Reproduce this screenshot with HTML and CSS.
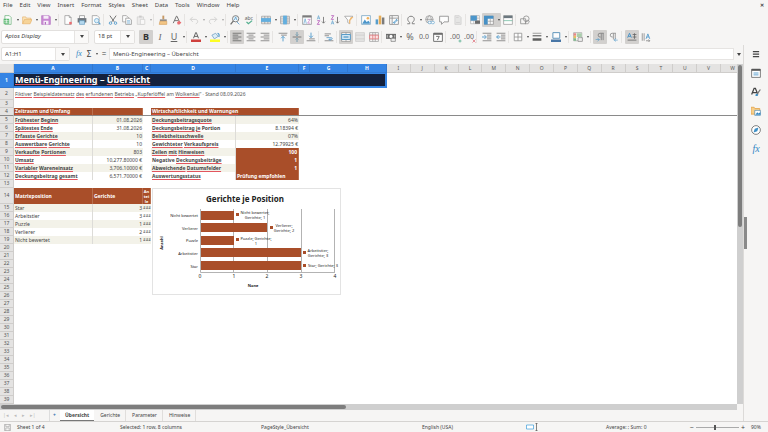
FILE: index.html
```html
<!DOCTYPE html>
<html lang="de">
<head>
<meta charset="utf-8">
<title>Menü-Engineering – Übersicht</title>
<link rel="stylesheet" href="styles.css">
</head>
<body>
<header class="menubar">
  <nav class="menus">
    <button>File</button><button>Edit</button><button>View</button><button>Insert</button><button>Format</button><button>Styles</button><button>Sheet</button><button>Data</button><button>Tools</button><button>Window</button><button>Help</button>
  </nav>
  <button class="close" aria-label="Close document">✕</button>
</header>

<div class="toolbar" role="toolbar" aria-label="Standard">
  <button class="tb" aria-label="New"><svg viewBox="0 0 16 16"><path d="M3 1h7l3 3v11H3z" fill="#fff" stroke="#3a9a50"/><path d="M1 6h9v8H1z" fill="#3fae5a"/><path d="M2 9h7M2 11.500h7M5.500 7v6" stroke="#fff"/></svg></button><button class="dd" aria-label="New options"></button>
  <button class="tb" aria-label="Open"><svg viewBox="0 0 16 16"><path d="M1 14V3h5l1 2h7v3" fill="#fbe3b4" stroke="#e3a34b"/><path d="M1 14l3-7h12l-3 7z" fill="#f7cf8a" stroke="#e3a34b"/></svg></button><button class="dd" aria-label="Open options"></button>
  <button class="tb" aria-label="Save"><svg viewBox="0 0 16 16"><path d="M1 1h12l2 2v12H1z" fill="#c276cf" stroke="#a55bb5"/><path d="M4 1h8v5H4zM4 9h8v6H4z" fill="#f7ecf9"/><path d="M6 11h2v4H6z" fill="#a55bb5"/></svg></button><button class="dd" aria-label="Save options"></button>
  <span class="sep"></span>
  <button class="tb" aria-label="Export PDF"><svg viewBox="0 0 16 16"><path d="M3 1h7l3 3v11H3z" fill="#fff" stroke="#777"/><path d="M10 1v3h3" fill="none" stroke="#777"/><path d="M10 11h4v4h-4z" fill="#e8565b"/></svg></button>
  <button class="tb" aria-label="Print"><svg viewBox="0 0 16 16"><path d="M4 1h8v5H4z" fill="#fff" stroke="#666"/><path d="M1 5h14v7H1z" fill="#596169"/><path d="M4 9h8v6H4z" fill="#a9d3ee" stroke="#4488b5"/></svg></button>
  <button class="tb" aria-label="Print preview"><svg viewBox="0 0 16 16"><path d="M2 1h8l3 3v11H2z" fill="#fff" stroke="#777"/><circle cx="9" cy="9" r="3.500" fill="#d9eefa" stroke="#3d8fc6"/><path d="M12 12l3 3" stroke="#3d8fc6" stroke-width="2"/></svg></button>
  <span class="sep"></span>
  <button class="tb" aria-label="Cut"><svg viewBox="0 0 16 16"><path d="M3 1l7 10M13 1L6 11" stroke="#555" stroke-width="1.500"/><circle cx="4" cy="13" r="2" fill="none" stroke="#3d8fc6" stroke-width="1.500"/><circle cx="12" cy="13" r="2" fill="none" stroke="#3d8fc6" stroke-width="1.500"/></svg></button>
  <button class="tb" aria-label="Copy"><svg viewBox="0 0 16 16"><path d="M1 1h6l3 3v7H1z" fill="#fff" stroke="#777"/><path d="M6 5h6l3 3v7H6z" fill="#fff" stroke="#666"/><path d="M8 9h5M8 11h5M8 13h5" stroke="#58a1d0"/></svg></button>
  <button class="tb dim" aria-label="Paste"><svg viewBox="0 0 16 16"><path d="M2 3h10v12H2z" fill="#ddd" stroke="#888"/><path d="M5 1h4v3H5z" fill="#888"/><path d="M7 7h7v8H7z" fill="#fff" stroke="#888"/></svg></button><button class="dd dim" aria-label="Paste options"></button>
  <span class="sep"></span>
  <button class="tb" aria-label="Clone formatting"><svg viewBox="0 0 16 16"><path d="M7 1h3v6H7z" fill="#bf8a4c"/><path d="M3 7h11v3H3z" fill="#777"/><path d="M3 10h11v5H2z" fill="#f3be72" stroke="#cf9140"/></svg></button>
  <button class="tb" aria-label="Clear formatting"><svg viewBox="0 0 16 16"><path d="M2 13L7 2h1l4 9M4 9h6" fill="none" stroke="#555" stroke-width="1.500"/><path d="M8 12l3-3 4 3-3 3H9z" fill="#e8565b"/></svg></button>
  <span class="sep"></span>
  <button class="tb dim" aria-label="Undo"><svg viewBox="0 0 16 16"><path d="M6 3L2 7l4 4M2 7h8c5 0 5 6 1 7" fill="none" stroke="#999" stroke-width="1.500"/></svg></button><button class="dd dim" aria-label="Undo list"></button>
  <button class="tb dim" aria-label="Redo"><svg viewBox="0 0 16 16"><path d="M10 3l4 4-4 4M14 7H6c-5 0-5 6-1 7" fill="none" stroke="#999" stroke-width="1.500"/></svg></button><button class="dd dim" aria-label="Redo list"></button>
  <span class="sep"></span>
  <button class="tb" aria-label="Find and replace"><svg viewBox="0 0 16 16"><circle cx="9" cy="6" r="5" fill="#eef7fc" stroke="#666" stroke-width="1.500"/><path d="M5.500 9.500L1 15" stroke="#555" stroke-width="2"/><path d="M7 8l2-5 2 5M11 11l4 4" fill="none" stroke="#3d8fc6" stroke-width="1.300"/></svg></button>
  <button class="tb" aria-label="Spelling"><svg viewBox="0 0 16 16"><text x="1" y="8" class="glyph-abc">abc</text><path d="M4 11l3 3 6-5" fill="none" stroke="#35a27c" stroke-width="2"/></svg></button>
  <span class="sep"></span>
  <button class="tb" aria-label="Row"><svg viewBox="0 0 16 16"><path d="M1 2h14v12H1zM1 5h14M1 11h14M6 2v12M11 2v12" fill="#fff" stroke="#777"/><path d="M0 5h16v6H0z" fill="#4aa3dc"/></svg></button><button class="dd" aria-label="Row options"></button>
  <button class="tb" aria-label="Column"><svg viewBox="0 0 16 16"><path d="M1 2h14v12H1zM1 5h14M1 8h14M1 11h14M6 2v12M11 2v12" fill="#fff" stroke="#777"/><path d="M5 1h6v14H5z" fill="#4aa3dc"/></svg></button><button class="dd" aria-label="Column options"></button>
  <span class="sep"></span>
  <button class="tb" aria-label="Sort"><svg viewBox="0 0 16 16"><path d="M1 1h14v14H1z" fill="#fff" stroke="#666"/><path d="M1 1h14v3H1z" fill="#666"/><path d="M3 14l2-8 2 8" fill="none" stroke="#3d8fc6"/><path d="M9 7h4L9 13h4" fill="none" stroke="#b455b8"/></svg></button>
  <button class="tb" aria-label="Sort ascending"><svg viewBox="0 0 16 16"><path d="M2 7l2-6 2 6M3 5h3" fill="none" stroke="#3d8fc6"/><path d="M2 9h4l-4 6h4" fill="none" stroke="#b455b8" stroke-width="1.500"/><path d="M12 3v10M9.500 10.500L12 13l2.500-2.500" fill="none" stroke="#555" stroke-width="1.300"/></svg></button>
  <button class="tb" aria-label="Sort descending"><svg viewBox="0 0 16 16"><path d="M2 15l2-6 2 6M3 13h3" fill="none" stroke="#3d8fc6"/><path d="M2 1h4L2 7h4" fill="none" stroke="#b455b8" stroke-width="1.500"/><path d="M12 3v10M9.500 10.500L12 13l2.500-2.500" fill="none" stroke="#555" stroke-width="1.300"/></svg></button>
  <button class="tb" aria-label="AutoFilter"><svg viewBox="0 0 16 16"><path d="M1 2h13L9 8v6l-3-2V8z" fill="#fff" stroke="#777"/><path d="M11 3h4l-5 6v5l-2-1V9z" fill="#f1b05c"/></svg></button>
  <span class="sep"></span>
  <button class="tb" aria-label="Image"><svg viewBox="0 0 16 16"><path d="M1 1h14v14H1z" fill="#fff" stroke="#3d7fae"/><path d="M2 14l4-7 3 4 3-2 2 3v2z" fill="#2f86c4"/><circle cx="11" cy="5" r="2" fill="#f0a33f"/></svg></button>
  <button class="tb" aria-label="Chart"><svg viewBox="0 0 16 16"><path d="M1 7h4v8H1z" fill="#3d8fc6"/><path d="M6 1h4v14H6z" fill="#e5a13c"/><path d="M11 4h4v11h-4z" fill="#666"/></svg></button>
  <button class="tb" aria-label="Pivot table"><svg viewBox="0 0 16 16"><path d="M1 1h14v14H1zM1 5h14M5 1v14" fill="#fff" stroke="#777" stroke-width="1.300"/><path d="M7 12c4 0 5-1 5-5M10 9l2-2 2 2M9 10l-2 2 2 2" fill="none" stroke="#3d8fc6" stroke-width="1.500"/></svg></button>
  <span class="sep"></span>
  <button class="tb" aria-label="Special character"><svg viewBox="0 0 16 16"><path d="M2 14h4v-2C1 9 2 2 8 2s7 7 2 10v2h4" fill="none" stroke="#666" stroke-width="1.500"/></svg></button><button class="dd" aria-label="Special characters"></button>
  <button class="tb" aria-label="Hyperlink"><svg viewBox="0 0 16 16"><circle cx="7" cy="7" r="6" fill="#eee" stroke="#777"/><path d="M1 7h12M7 1c-4 4-4 8 0 12M7 1c4 4 4 8 0 12" fill="none" stroke="#777"/><rect x="5" y="10" width="5" height="4" rx="2" fill="#fff" stroke="#3d8fc6"/><rect x="10" y="10" width="5" height="4" rx="2" fill="#fff" stroke="#3d8fc6"/></svg></button>
  <button class="tb" aria-label="Comment"><svg viewBox="0 0 16 16"><path d="M1 2h14v9H8l-4 4v-4H1z" fill="#fff" stroke="#777" stroke-width="1.300"/></svg></button>
  <button class="tb dim" aria-label="Headers and footers"><svg viewBox="0 0 16 16"><path d="M3 1h7l3 3v11H3z" fill="#ccc" stroke="#888"/><path d="M5 4h4M5 12h6" stroke="#888"/></svg></button>
  <span class="sep"></span>
  <button class="tb" aria-label="Print area"><svg viewBox="0 0 16 16"><path d="M1 1h14v13H1zM1 5h14M1 9h14M6 1v13M11 1v13" fill="#fff" stroke="#999"/><path d="M1 1h10v8H1z" fill="#2f86c4"/><path d="M8 9h8v5H8z" fill="#555"/></svg></button>
  <span class="pair on"><button class="tb" aria-label="Freeze rows and columns"><svg viewBox="0 0 16 16"><path d="M1 2h14v13H1z" fill="#fff" stroke="#777"/><path d="M0 1h15v5H6v9H0z" fill="#2f86c4"/><path d="M10 6v9M6 10h9" stroke="#888"/></svg></button><button class="dd" aria-label="Freeze options"></button></span>
  <button class="tb" aria-label="Split window"><svg viewBox="0 0 16 16"><path d="M1 1h14v14H1z" fill="#fff" stroke="#777"/><path d="M1 1h14v4H1z" fill="#55636b"/><path d="M1 9h14" stroke="#35a27c"/></svg></button>
  <span class="sep"></span>
  <button class="tb" aria-label="Draw functions"><svg viewBox="0 0 16 16"><path d="M1 6h8v8H1z" fill="none" stroke="#777" stroke-width="1.200"/><circle cx="10" cy="6" r="4.500" fill="none" stroke="#777" stroke-width="1.200"/><path d="M8 14l3-6 4 2-2 4z" fill="none" stroke="#777"/></svg></button>
</div>

<div class="toolbar" role="toolbar" aria-label="Formatting">
  <span class="combo font"><input aria-label="Font name" value="Aptos Display"><button aria-label="Font list"></button></span>
  <span class="combo size"><input aria-label="Font size" value="18 pt"><button aria-label="Size list"></button></span>
  <button class="tb on letter bold">B</button><button class="tb letter ital">I</button><button class="tb letter und">U</button><button class="dd" aria-label="Underline styles"></button>
  <span class="sep"></span>
  <button class="tb" aria-label="Font colour"><svg viewBox="0 0 16 16"><path d="M4 10L7.500 1h1L12 10M5 7h6" fill="none" stroke="#444" stroke-width="1.500"/><path d="M0 12h16v4H0z" fill="#c9211e"/></svg></button><button class="dd" aria-label="Font colours"></button>
  <button class="tb" aria-label="Background colour"><svg viewBox="0 0 16 16"><path d="M3 5l6-3 4 5-6 4z" fill="#d8ecf8" stroke="#3d7fae"/><path d="M12 2c3 0 3 4 2 6" fill="none" stroke="#3d8fc6" stroke-width="2"/><path d="M0 12h16v4H0z" fill="#ffff00"/></svg></button><button class="dd" aria-label="Background colours"></button>
  <span class="sep"></span>
  <button class="tb on" aria-label="Align left"><svg viewBox="0 0 16 16"><path d="M1 2h14M1 5h9M1 8h14M1 11h9M1 14h14" stroke="#555" stroke-width="1.300"/></svg></button>
  <button class="tb" aria-label="Center"><svg viewBox="0 0 16 16"><path d="M1 2h14M4 5h8M1 8h14M4 11h8M1 14h14" stroke="#666" stroke-width="1.300"/></svg></button>
  <button class="tb" aria-label="Align right"><svg viewBox="0 0 16 16"><path d="M1 2h14M6 5h9M1 8h14M6 11h9M1 14h14" stroke="#666" stroke-width="1.300"/></svg></button>
  <span class="sep wide"></span>
  <button class="tb" aria-label="Align top"><svg viewBox="0 0 16 16"><path d="M1 2h14M5 5h9" stroke="#666" stroke-width="1.300"/><path d="M8 15V7M5 10l3-3 3 3" fill="none" stroke="#3d8fc6" stroke-width="1.500"/></svg></button>
  <button class="tb on" aria-label="Center vertically"><svg viewBox="0 0 16 16"><path d="M1 8h14" stroke="#666" stroke-width="1.500"/><path d="M8 0v6M6 4l2 2 2-2M8 16v-6M6 12l2-2 2 2" fill="none" stroke="#5f8fa8" stroke-width="1.500"/></svg></button>
  <button class="tb" aria-label="Align bottom"><svg viewBox="0 0 16 16"><path d="M1 14h14M5 11h9" stroke="#666" stroke-width="1.300"/><path d="M8 1v8M5 6l3 3 3-3" fill="none" stroke="#3d8fc6" stroke-width="1.500"/></svg></button>
  <span class="sep wide"></span>
  <button class="tb" aria-label="Wrap text"><svg viewBox="0 0 16 16"><path d="M1 3h10M1 6h7M1 14h14" stroke="#666" stroke-width="1.300"/><path d="M4 9h7c3 0 3 3 0 3H8M10 10l-2 2 2 2" fill="none" stroke="#3d8fc6" stroke-width="1.300"/></svg></button>
  <span class="sep"></span>
  <button class="tb on" aria-label="Merge and center"><svg viewBox="0 0 16 16"><path d="M1 1h14v14H1zM1 4h14M1 12h14M8 1v3M8 12v3" fill="#fff" stroke="#777"/><path d="M1 4h14v8H1z" fill="#d5ecfa" stroke="#3d8fc6" stroke-width="1.500"/><path d="M4 8h8" stroke="#3d8fc6" stroke-width="2"/></svg></button>
  <button class="tb dim" aria-label="Merge cells"><svg viewBox="0 0 16 16"><path d="M1 1h14v14H1zM1 5h14M1 11h14" fill="#ccc" stroke="#777"/></svg></button>
  <button class="tb" aria-label="Unmerge cells"><svg viewBox="0 0 16 16"><path d="M1 1h14v14H1zM1 5h14M1 11h14M6 1v14M10 1v14" fill="#fff" stroke="#777"/><path d="M1 5h14v6H1zM6 5v6M10 5v6" fill="#fde2e2" stroke="#dc6468" stroke-width="1.300"/></svg></button>
  <span class="sep"></span>
  <button class="tb" aria-label="Currency"><svg viewBox="0 0 16 16"><path d="M0 3h16v8H0z" fill="#555"/><circle cx="8" cy="7" r="2.500" fill="#fff"/><path d="M2 5v4M14 5v4" stroke="#fff"/><path d="M8 10h7v5H8z" fill="#eee" stroke="#555"/></svg></button><button class="dd" aria-label="Currencies"></button>
  <button class="tb letter">%</button><button class="tb letter num">0.0</button>
  <button class="tb" aria-label="Date"><svg viewBox="0 0 16 16"><path d="M1 2h14v13H1z" fill="#fff" stroke="#555" stroke-width="1.500"/><path d="M1 3h14" stroke="#555" stroke-width="3"/><path d="M5 7h5l-3 6" fill="none" stroke="#555" stroke-width="1.500"/></svg></button>
  <span class="sep"></span>
  <button class="tb letter num" aria-label="Add decimal place">.00<svg class="mark" viewBox="0 0 8 8"><path d="M4 1v6M1 4h6" stroke="#35a27c" stroke-width="1.500"/></svg></button><button class="tb letter num" aria-label="Delete decimal place">.00<svg class="mark" viewBox="0 0 8 8"><path d="M1 1l6 6M7 1L1 7" stroke="#dc5a68" stroke-width="1.500"/></svg></button>
  <span class="sep wide"></span>
  <button class="tb" aria-label="Increase indent"><svg viewBox="0 0 16 16"><path d="M1 2h14M8 5h7M8 8h7M8 11h7M1 14h14" stroke="#666" stroke-width="1.300"/><path d="M0 8h6M4 5l3 3-3 3" fill="none" stroke="#3d8fc6" stroke-width="1.500"/></svg></button>
  <button class="tb" aria-label="Decrease indent"><svg viewBox="0 0 16 16"><path d="M1 2h14M8 5h7M8 8h7M8 11h7M1 14h14" stroke="#666" stroke-width="1.300"/><path d="M1 8h6M4 5L1 8l3 3" fill="none" stroke="#3d8fc6" stroke-width="1.500"/></svg></button>
  <span class="sep"></span>
  <button class="tb" aria-label="Borders"><svg viewBox="0 0 16 16"><path d="M2 2h12v12H2zM8 2v12M2 8h12" fill="#fff" stroke="#777" stroke-width="1.200"/></svg></button><button class="dd" aria-label="Border options"></button>
  <button class="tb" aria-label="Border style"><svg viewBox="0 0 16 16"><path d="M1 2h14" stroke="#555"/><path d="M1 6h14" stroke="#555" stroke-width="2"/><path d="M1 12h14" stroke="#444" stroke-width="4"/></svg></button><button class="dd" aria-label="Border styles"></button>
  <button class="tb" aria-label="Border colour"><svg viewBox="0 0 16 16"><path d="M3 1h11v9H3z" fill="#fff" stroke="#3d7fae" stroke-width="1.500"/><path d="M0 12h16v4H0z" fill="#2a6099"/></svg></button><button class="dd" aria-label="Border colours"></button>
  <span class="sep"></span>
  <button class="tb" aria-label="Conditional formatting"><svg viewBox="0 0 16 16"><path d="M1 1h13v13H1z" fill="#fff" stroke="#888"/><path d="M1 2h4v4H1z" fill="#e57373"/><path d="M1 6h4v4H1z" fill="#e9b44c"/><path d="M1 10h4v4H1z" fill="#67b07a"/><path d="M6 2h8v6H6z" fill="#9dc79f"/><path d="M8 9h7v6H8z" fill="#eee" stroke="#666"/></svg></button><button class="dd" aria-label="Conditional options"></button>
  <span class="sep"></span>
  <button class="tb on" aria-label="Left to right"><svg viewBox="0 0 16 16"><path d="M14 2H8a3 3 0 000 6h1M10 2v11M13 2v11" fill="none" stroke="#777" stroke-width="1.500"/><path d="M1 12h6M4 10l3 2-3 3" fill="none" stroke="#3d8fc6"/></svg></button>
  <button class="tb" aria-label="Right to left"><svg viewBox="0 0 16 16"><path d="M11 2H5a3 3 0 000 6h1M7 2v10M10 2v10" fill="none" stroke="#777" stroke-width="1.300"/><path d="M14 13H9M11 10l-3 3 3 2" fill="none" stroke="#3d8fc6"/></svg></button>
  <span class="sep wide"></span>
  <button class="tb on" aria-label="Horizontal text"><svg viewBox="0 0 16 16"><path d="M1 9l3-7 3 7M2 7h4" fill="none" stroke="#2f86c4" stroke-width="1.500"/><path d="M9 4h6M9 8h6M1 13h14M12 2v9" stroke="#555" stroke-width="1.300"/></svg></button>
  <button class="tb" aria-label="Vertical text"><svg viewBox="0 0 16 16"><path d="M8 11l3-8 3 8M9 8h4" fill="none" stroke="#2f86c4" stroke-width="1.300"/><path d="M2 2v12M5 2v12M8 14h6M12 12l2 2-2 2" fill="none" stroke="#777" stroke-width="1.300"/></svg></button>
</div>

<div class="workspace">
  <main class="main">
    <div class="formulabar">
      <span class="combo name"><input aria-label="Name box" value="A1:H1"><button aria-label="Names"></button></span>
      <button class="fbtn fx">fx</button><button class="fbtn">Σ</button><button class="dd" aria-label="Functions"></button><button class="fbtn">=</button>
      <input class="formula" aria-label="Input line" value="Menü-Engineering – Übersicht">
      <button class="dd big" aria-label="Expand formula bar"></button>
    </div>
    <div class="sheetarea">
      <div class="sheet">
        <table class="cells">
          <colgroup><col class="c0"><col class="ca"><col class="cb"><col class="cc"><col class="cd"><col class="ce"><col class="cf"><col class="cg"><col class="ch"><col span="15"></colgroup>
          <thead><tr class="cols"><th></th><th class="s">A</th><th class="s">B</th><th class="s">C</th><th class="s">D</th><th class="s">E</th><th class="s">F</th><th class="s">G</th><th class="s">H</th><th>I</th><th>J</th><th>K</th><th>L</th><th>M</th><th>N</th><th>O</th><th>P</th><th>Q</th><th>R</th><th>S</th><th>T</th><th>U</th><th>V</th><th>W</th></tr></thead>
          <tbody>
            <tr class="r1"><th class="s">1</th><td class="title" colspan="8"><u>Menü-Engineering</u> – <u>Übersicht</u></td></tr>
            <tr class="r2"><th>2</th><td class="note" colspan="8"><u>Fiktiver</u> <u>Beispieldatensatz</u> <u>des</u> <u>erfundenen</u> <u>Betriebs</u> „<u>Kupferlöffel</u> am <u>Wolkenkai</u>“ · Stand 08.09.2026</td></tr>
            <tr><th>3</th></tr>
            <tr class="r4"><th>4</th><td class="h"><u>Zeitraum</u> <u>und</u> <u>Umfang</u></td><td class="h"></td><td></td><td class="h" colspan="2"><u>Wirtschaftlichkeit</u> <u>und</u> <u>Warnungen</u></td><td colspan="18"></td></tr>
            <tr class="z"><th>5</th><td class="k"><u>Frühester</u> <u>Beginn</u></td><td class="v">01.08.2026</td><td></td><td class="k"><u>Deckungsbeitragsquote</u></td><td class="v">64%</td></tr>
            <tr><th>6</th><td class="k"><u>Spätestes</u> <u>Ende</u></td><td class="v">31.08.2026</td><td></td><td class="k"><u>Deckungsbeitrag</u> <u>je</u> Portion</td><td class="v">8.18394 €</td></tr>
            <tr class="z"><th>7</th><td class="k"><u>Erfasste</u> <u>Gerichte</u></td><td class="v">10</td><td></td><td class="k"><u>Beliebtheitsschwelle</u></td><td class="v">07%</td></tr>
            <tr><th>8</th><td class="k"><u>Auswertbare</u> <u>Gerichte</u></td><td class="v">10</td><td></td><td class="k"><u>Gewichteter</u> <u>Verkaufspreis</u></td><td class="v">12.79925 €</td></tr>
            <tr class="z"><th>9</th><td class="k"><u>Verkaufte</u> <u>Portionen</u></td><td class="v">803</td><td></td><td class="k"><u>Zeilen</u> <u>mit</u> <u>Hinweisen</u></td><td class="v h">100</td></tr>
            <tr><th>10</th><td class="k"><u>Umsatz</u></td><td class="v">10,277.80000 €</td><td></td><td class="k">Negative <u>Deckungsbeiträge</u></td><td class="v h">1</td></tr>
            <tr class="z"><th>11</th><td class="k"><u>Variabler</u> <u>Wareneinsatz</u></td><td class="v">3,706.10000 €</td><td></td><td class="k"><u>Abweichende</u> <u>Datumsfelder</u></td><td class="v h">1</td></tr>
            <tr><th>12</th><td class="k"><u>Deckungsbeitrag</u> <u>gesamt</u></td><td class="v">6,571.70000 €</td><td></td><td class="k"><u>Auswertungsstatus</u></td><td class="h">Prüfung empfohlen</td></tr>
            <tr><th>13</th></tr>
            <tr class="r14"><th>14</th><td class="h">Matrixposition</td><td class="h">Gerichte</td><td class="h clip">An<br>tei<br>le</td></tr>
            <tr class="z"><th>15</th><td class="n">Star</td><td class="v">3</td><td class="hash">###</td></tr>
            <tr><th>16</th><td class="n">Arbeitstier</td><td class="v">3</td><td class="hash">###</td></tr>
            <tr class="z"><th>17</th><td class="n">Puzzle</td><td class="v">1</td><td class="hash">###</td></tr>
            <tr><th>18</th><td class="n">Verlierer</td><td class="v">2</td><td class="hash">###</td></tr>
            <tr class="z"><th>19</th><td class="n">Nicht bewertet</td><td class="v">1</td><td class="hash">###</td></tr>
            <tr><th>20</th></tr><tr><th>21</th></tr><tr><th>22</th></tr><tr><th>23</th></tr><tr><th>24</th></tr><tr><th>25</th></tr><tr><th>26</th></tr><tr><th>27</th></tr><tr><th>28</th></tr><tr><th>29</th></tr><tr><th>30</th></tr><tr><th>31</th></tr><tr><th>32</th></tr><tr><th>33</th></tr><tr><th>34</th></tr><tr><th>35</th></tr><tr><th>36</th></tr><tr><th>37</th></tr><tr><th>38</th></tr><tr><th>39</th></tr>
          </tbody>
        </table>
        <svg class="chart" viewBox="1 1 187 105" role="img" aria-label="Gerichte je Position">
          <path d="M81.500 21v63M115.500 21v63M149.500 21v63M182.500 21v63" stroke="#b3b3b3"/>
          <g fill="#a94e29"><path d="M48 23h34v9H48zM48 35h67v9H48zM48 48h34v9H48zM48 60h101v9H48zM48 73h101v9H48z"/><path d="M84 25h3v3h-3zM118 38h3v3h-3zM84 50h3v3h-3zM151 63h3v3h-3zM151 76h3v3h-3z"/></g>
          <path d="M48.500 21v63.500H183" fill="none" stroke="#b3b3b3"/>
          <text class="ctitle" x="93" y="14">Gerichte je Position</text>
          <g class="cat"><text x="46" y="29">Nicht bewertet</text><text x="46" y="42">Verlierer</text><text x="46" y="54">Puzzle</text><text x="46" y="67">Arbeitstier</text><text x="46" y="80">Star</text></g>
          <g class="lab"><text x="103" y="26">Nicht bewertet;</text><text x="103" y="31">Gerichte; 1</text><text x="132" y="39">Verlierer;</text><text x="132" y="44">Gerichte; 2</text><text x="104" y="52">Puzzle; Gerichte;</text><text x="104" y="57">1</text><text x="166" y="64">Arbeitstier;</text><text x="166" y="69">Gerichte; 3</text><text x="171" y="79">Star; Gerichte; 3</text></g>
          <g class="axis"><text x="48" y="90">0</text><text x="82" y="90">1</text><text x="115" y="90">2</text><text x="149" y="90">3</text><text x="183" y="90">4</text></g>
          <g class="axistitle"><text x="101" y="99">None</text><text transform="translate(11 55) rotate(-90)">Anzahl</text></g>
        </svg>
      </div>
      <div class="vscroll"><div class="thumb"></div></div>
    </div>
    <div class="hscroll"><div class="thumb"></div></div>
    <div class="tabs">
      <span class="nav"><button aria-label="First sheet">|◂</button><button aria-label="Previous sheet">◂</button><button aria-label="Next sheet">▸</button><button aria-label="Last sheet">▸|</button></span>
      <button class="add" aria-label="Add sheet">+</button>
      <button class="tab cur">Übersicht</button><button class="tab">Gerichte</button><button class="tab">Parameter</button><button class="tab">Hinweise</button>
    </div>
  </main>
  <aside class="sidebar">
    <span class="handle"></span>
    <button class="burger" aria-label="Sidebar settings"><svg viewBox="0 0 16 16"><path d="M3 4h10M3 8h10M3 12h10" stroke="#444" stroke-width="2"/></svg></button>
    <button aria-label="Properties"><svg viewBox="0 0 16 16"><path d="M1 2h14v13H1z" fill="#fff" stroke="#666" stroke-width="1.300"/><path d="M1 3h14" stroke="#555" stroke-width="3"/><path d="M4 8h8M4 11h8" stroke="#3d8fc6" stroke-width="1.300"/></svg></button>
    <button aria-label="Styles"><svg viewBox="0 0 16 16"><path d="M1 12L5 2h2l4 10M3 9h6" fill="none" stroke="#444" stroke-width="2"/><path d="M15 4l-5 7" stroke="#777" stroke-width="2"/><path d="M7 14c0-3 3-4 4-2s-1 3-4 2z" fill="#3d8fc6"/></svg></button>
    <button aria-label="Gallery"><svg viewBox="0 0 16 16"><path d="M0 13V2h5l1 2h8v9z" fill="#f7cf8a" stroke="#e3a34b" stroke-width="1.300"/><path d="M6 7h9v8H6z" fill="#fff" stroke="#3d7fae"/><path d="M7 14l3-4 2 2 3-2v4z" fill="#2f86c4"/></svg></button>
    <button aria-label="Navigator"><svg viewBox="0 0 16 16"><circle cx="8" cy="8" r="7" fill="#fff" stroke="#666" stroke-width="1.300"/><path d="M12 4l-2 6-6 2 2-6z" fill="#3d8fc6"/></svg></button>
    <button class="fx" aria-label="Functions">fx</button>
  </aside>
</div>

<footer class="status">
  <svg class="disk" viewBox="0 0 16 16"><path d="M1 1h14v14H1zM4 1v5h8V1M4 15V9h8v6" fill="none" stroke="#999" stroke-width="1.300"/></svg>
  <span class="p1">Sheet 1 of 4</span><span class="p2">Selected: 1 row, 8 columns</span><span class="p3">PageStyle_Übersicht</span><span class="p4">English (USA)</span>
  <span class="p5"><svg viewBox="0 0 24 16"><path d="M1 4h14v8H1z" fill="#fff" stroke="#4aa3dc" stroke-width="1.500"/><path d="M19 1h4M19 15h4M21 1v14" stroke="#444" stroke-width="1.300"/></svg></span>
  <span class="p6">Average: ; Sum: 0</span>
  <label class="zoom"><span>−</span><input type="range" min="0" max="100" value="45" aria-label="Zoom"><span>+</span></label><span class="pct">90%</span>
</footer>
</body>
</html>
```
FILE: styles.css
```css
* { box-sizing: border-box; }
html, body { height: 100%; }
body {
  margin: 0;
  display: flex;
  flex-direction: column;
  overflow: hidden;
  background: #f6f5f4;
  color: #444;
  font: 5px/7px "Noto Sans", sans-serif;
}
button, input { font: inherit; color: inherit; border: 0; padding: 0; margin: 0; background: none; min-width: 0; outline: none; }
svg { display: block; }

.menubar { display: flex; justify-content: space-between; height: 11px; flex: none; padding: 0 4px 0 3px; font-size: 6px; }
.menus { display: flex; gap: 7px; }
.close { font-size: 5px; font-weight: bold; }

.toolbar { display: flex; align-items: center; height: 17px; flex: none; padding-left: 1px; white-space: nowrap; }
.tb { width: 14px; height: 14px; flex: none; display: grid; place-items: center; border-radius: 1px; }
.tb svg { width: 10px; height: 10px; opacity: .85; }
.on { background: #d2d0ce; border-radius: 1px; }
.pair { display: flex; align-items: center; }
.dim { opacity: .45; }
.dd { width: 5px; height: 10px; flex: none; display: grid; place-items: center; }
.dd::after, .combo button::after { content: ""; border: 1px solid transparent; border-top: 2px solid #444; border-bottom: 0; }
.dd.big { width: 9px; }
.dd.big::after, .combo button::after { border-width: 3px 2px 0; }
.sep { width: 3px; height: 12px; flex: none; border-left: 1px solid #e6e4e2; }
.sep.wide { width: 4px; }
.letter { font-size: 9px; line-height: 12px; color: #666; }
.letter.bold { font-weight: bold; color: #333; }
.letter.ital { font-family: "Liberation Serif", serif; font-style: italic; }
.letter.und { text-decoration: underline; }
.letter.num { position: relative; font-size: 7px; }
.tb .mark { position: absolute; right: 0; bottom: 1px; width: 4px; height: 4px; }
.glyph-abc { font-size: 8px; fill: #444; }

.combo { display: flex; height: 14px; flex: none; background: #fff; border: 1px solid #e2e0de; border-radius: 2px; }
.combo input { flex: 1; padding-left: 3px; font-size: 6px; }
.combo button { width: 14px; display: grid; place-items: center; border-left: 1px solid #e6e4e2; background: #faf9f8; }
.combo.font { width: 88px; margin-right: 5px; }
.combo.font input { font-style: italic; }
.combo.size { width: 41px; margin-right: 4px; }
.combo.name { width: 69px; margin-right: 4px; }

.workspace { flex: 1; min-height: 0; display: flex; }
.main { flex: 1; min-width: 0; display: flex; flex-direction: column; }
.formulabar { display: flex; align-items: center; height: 19px; flex: none; padding: 0 0 1px 1px; }
.fbtn { width: 10px; font-size: 8px; line-height: 10px; }
.fx { color: #2f86c4; font-family: "Liberation Serif", serif; font-style: italic; }
.formula { flex: 1; height: 12px; padding-left: 3px; background: #fff; border: 1px solid #e6e4e2; font-size: 6px; }

.sheetarea { flex: 1; min-height: 0; display: flex; }
.sheet { flex: 1; min-width: 0; position: relative; overflow: hidden; background: #fff; }
.cells { table-layout: fixed; width: calc(100% + 8px); border-collapse: separate; border-spacing: 0; }
.c0 { width: 14px; } .ca { width: 79px; } .cb { width: 50px; } .cc { width: 8px; } .cd { width: 85px; }
.ce { width: 63px; } .cf { width: 11px; } .cg { width: 38px; } .ch { width: 39px; }
tr { height: 8px; }
th, td { padding: 0 1px; height: 8px; line-height: 7px; white-space: nowrap; overflow: hidden; text-align: left; }
th { background: #e4e3e2; border-right: 1px solid #cfcdcb; border-bottom: 1px solid #cfcdcb; text-align: center; font-weight: normal; color: #555; }
.cols th { height: 9px; line-height: 8px; }
th.s { background: #3584e4; border-color: #3278cf; color: #fff; font-weight: bold; }
.r1 > * { height: 15px; }
.r2 > * { height: 12px; }
.title { background: #14213d; border: 1px solid #3584e4; border-width: 1px 2px 2px 0; color: #fff; font-size: 9px; line-height: 12px; font-weight: bold; }
.note { color: #555; }
u { text-decoration: underline 1px #e2555e; text-underline-offset: 1px; text-decoration-skip-ink: none; }
.h u { text-decoration-color: #d9503f; }
.r4 > * { border-bottom: 1px solid #8a8a8a; }
td.h { background: #a94e29; color: #fff; font-weight: bold; border-right: 1px solid #b9704f; }
.k { font-weight: bold; border-right: 1px solid #dddcd8; }
.n { border-right: 1px solid #dddcd8; }
.v { text-align: right; }
.z td:not(:empty):not(.h) { background: #f3f2e9; }
.r14 > * { height: 16px; }
td.clip { padding: 0; font-size: 4px; line-height: 5px; text-align: center; }
td.hash { padding: 0; font-size: 4px; line-height: 6px; text-align: center; color: #222; }

.chart { position: absolute; left: 152px; top: 124px; width: 189px; height: 107px; background: #fff; border: 1px solid #e3e3e3; font-size: 4px; fill: #222; }
.ctitle { font-size: 8px; font-weight: bold; text-anchor: middle; }
.cat { text-anchor: end; }
.lab, .axis, .axistitle { text-anchor: middle; }
.axis { font-size: 5px; }
.axistitle { font-weight: bold; }

.vscroll { width: 6px; flex: none; background: #cfcfcf; padding: 1px; }
.vscroll .thumb { height: 48%; background: #7d7d7d; border-radius: 2px; }
.hscroll { height: 6px; flex: none; margin-right: 6px; background: #cfcfcf; padding: 1px; }
.hscroll .thumb { width: 47%; height: 4px; background: #7d7d7d; border-radius: 2px; }

.tabs { display: flex; height: 11px; flex: none; align-items: stretch; gap: 1px; padding-left: 3px; }
.nav { display: flex; gap: 5px; width: 45px; color: #bbb; }
.add { width: 10px; color: #2f6fae; font-weight: bold; border-left: 1px solid #ddd; }
.tab { padding: 0 5px; border-right: 1px solid #e0dedc; }
.tab.cur { background: #fff; font-weight: bold; border: 0; border-bottom: 1px solid #777; }

.sidebar { width: 25px; flex: none; position: relative; display: flex; flex-direction: column; align-items: center; gap: 9px; border-left: 1px solid #dcdad8; }
.sidebar button { width: 14px; height: 10px; display: grid; place-items: center; font-size: 10px; line-height: 10px; }
.sidebar svg { width: 10px; height: 10px; }
.burger { margin-top: 4px; }
.handle { position: absolute; left: 0; top: 172px; width: 3px; height: 32px; background: #8a8a8a; }

.status { display: flex; align-items: center; height: 11px; flex: none; border-top: 1px solid #d5d3d1; padding-left: 4px; white-space: nowrap; }
.disk { width: 7px; height: 7px; margin-right: 6px; }
.p1 { width: 103px; }
.p2 { width: 141px; }
.p3 { width: 161px; }
.p4 { flex: 1; }
.p5 { width: 80px; }
.p5 svg { width: 12px; height: 8px; }
.p6 { width: 84px; }
.zoom { display: flex; align-items: center; gap: 2px; width: 55px; margin-right: 6px; font-size: 7px; }
.zoom input { appearance: none; flex: 1; height: 1px; background: #aaa; }
.zoom input::-webkit-slider-thumb { appearance: none; width: 2px; height: 5px; background: #555; }
.pct { width: 17px; }
```
